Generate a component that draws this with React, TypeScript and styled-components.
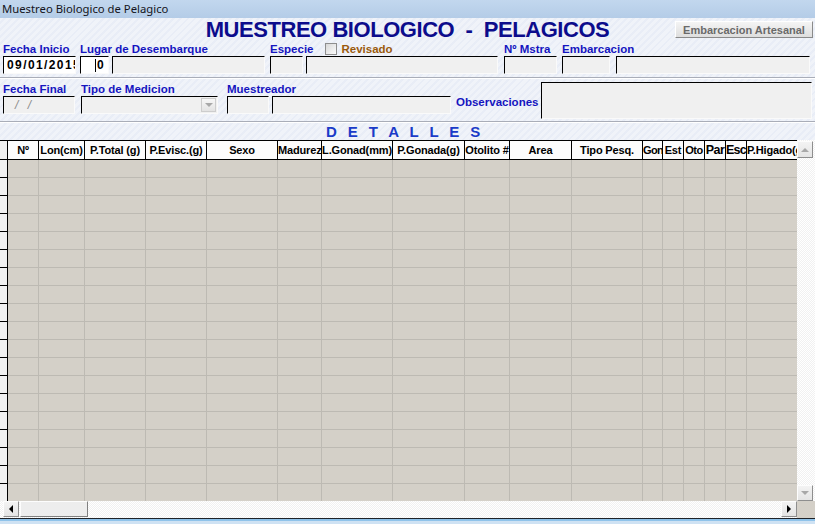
import React from "react";
import styled, { createGlobalStyle } from "styled-components";

const UI = `"Liberation Sans", Arial, sans-serif`;

const GlobalStyle = createGlobalStyle`
  html, body {
    margin: 0;
    padding: 0;
    overflow: hidden;
    background: #eef1f8;
  }
`;

const Window = styled.div`
  width: 815px;
  height: 524px;
  display: flex;
  flex-direction: column;
  overflow: hidden;
  font-family: ${UI};
  background:
    repeating-linear-gradient(135deg, rgba(200, 210, 235, 0.18) 0 2px, transparent 2px 5px),
    #f0f3f9;
`;

const TitleBar = styled.div`
  flex: none;
  height: 18px;
  box-sizing: border-box;
  padding-left: 2px;
  background: linear-gradient(#c2d7ee, #b4cce7);
  font: 11.3px "Noto Sans", sans-serif;
  line-height: 17px;
  color: #141420;
  white-space: nowrap;
`;

const Header = styled.div`
  flex: none;
  height: 24px;
  display: grid;
  grid-template-columns: 1fr auto 1fr;
  align-items: start;
`;

const BigTitle = styled.h1`
  grid-column: 2;
  margin: 0;
  font: bold 22px ${UI};
  line-height: 24px;
  letter-spacing: -0.45px;
  color: #0c0c8c;
  white-space: pre;
`;

const TopButton = styled.button`
  justify-self: end;
  margin: 3px 2px 0 0;
  width: 138px;
  height: 17px;
  padding: 0;
  box-sizing: border-box;
  border: 1px solid #a7a7a7;
  border-color: #ffffff #8a8a8a #8a8a8a #ffffff;
  background: linear-gradient(#f4f4f4, #dedede);
  font: bold 11px ${UI};
  color: #6a6a6a;
  white-space: nowrap;
`;

const FieldRow = styled.div<{ $h: number; $pt?: number }>`
  flex: none;
  height: ${(p) => p.$h}px;
  box-sizing: border-box;
  padding: ${(p) => p.$pt ?? 0}px 0 0 3px;
  display: flex;
  align-items: flex-start;
`;

const Group = styled.div<{ $ml?: number }>`
  display: flex;
  flex-direction: column;
  margin-left: ${(p) => p.$ml ?? 0}px;
`;

const Label = styled.div<{ $center?: boolean; $ml?: number }>`
  height: 14px;
  line-height: 14px;
  display: flex;
  align-items: center;
  font: bold 11.5px ${UI};
  color: #1515c0;
  white-space: nowrap;
  margin-left: ${(p) => p.$ml ?? 0}px;
  align-self: ${(p) => (p.$center ? "center" : "auto")};
`;

const Brown = styled.span`
  color: #9a5a0c;
`;

const Check = styled.span`
  width: 12px;
  height: 12px;
  box-sizing: border-box;
  margin: 0 4px 0 12px;
  border: 1px solid #8e8e8e;
  background: linear-gradient(135deg, #d8d8d8, #fbfbfb);
`;

const Inputs = styled.div<{ $gap?: number }>`
  display: flex;
  gap: ${(p) => p.$gap ?? 3}px;
`;

const Field = styled.div<{ $w: number; $h?: number; $white?: boolean; $right?: boolean; $ml?: number }>`
  flex: none;
  box-sizing: border-box;
  width: ${(p) => p.$w}px;
  height: ${(p) => p.$h ?? 18}px;
  margin-left: ${(p) => p.$ml ?? 0}px;
  display: flex;
  align-items: center;
  justify-content: ${(p) => (p.$right ? "flex-end" : "flex-start")};
  padding: ${(p) => (p.$right ? "0 3px 0 0" : "0 0 0 3px")};
  background: ${(p) => (p.$white ? "#ffffff" : "#f0f0f0")};
  border-top: 1px solid #000;
  border-left: 1px solid #000;
  border-right: 1px solid #fafafa;
  border-bottom: 1px solid #fafafa;
  overflow: hidden;
  white-space: nowrap;
  font: bold 12px ${UI};
  letter-spacing: 1.4px;
  color: #000;
`;

const Caret = styled.span`
  width: 1px;
  height: 13px;
  background: #000;
  margin-right: 1px;
`;

const Placeholder = styled.span`
  font: italic 12px ${UI};
  letter-spacing: 3px;
  color: #8a8a8a;
  margin-left: 8px;
`;

const DropButton = styled.span`
  margin-left: auto;
  margin-right: 1px;
  width: 15px;
  height: 14px;
  box-sizing: border-box;
  border: 1px solid #cdcdcd;
  background: linear-gradient(#f7f7f7, #e3e3e3);
  display: flex;
  align-items: center;
  justify-content: center;
`;

const Separator = styled.div`
  flex: none;
  height: 2px;
  box-sizing: border-box;
  border-top: 1px solid #a9adb8;
  border-bottom: 1px solid #ffffff;
`;

const Section = styled.div`
  flex: none;
  height: 17px;
  line-height: 20px;
  padding-left: 326px;
  font: bold 15px ${UI};
  word-spacing: 6.8px;
  color: #1a3bc8;
  white-space: nowrap;
`;

const GridArea = styled.div`
  flex: none;
  display: flex;
  flex-direction: column;
`;

const GridTop = styled.div`
  display: flex;
`;

const Table = styled.div`
  width: 797px;
  flex: none;
  overflow: hidden;
`;

const HeadRow = styled.div`
  display: flex;
  height: 20px;
  box-sizing: border-box;
  border-top: 1px solid #000;
`;

const HeadCell = styled.div<{ $w: number; $size: number; $ls: number }>`
  flex: none;
  width: ${(p) => p.$w}px;
  box-sizing: border-box;
  border-right: 1px solid #000;
  border-bottom: 1px solid #000;
  background: #fcfcfc;
  padding: 0;
  font: bold ${(p) => p.$size}px ${UI};
  letter-spacing: ${(p) => p.$ls}px;
  line-height: 18px;
  text-align: center;
  white-space: nowrap;
  overflow: hidden;
  color: #000;
`;

const RowHead = styled.div`
  flex: none;
  width: 8px;
  box-sizing: border-box;
  border-right: 1px solid #000;
  border-bottom: 1px solid #000;
  background: #f0f0f0;
`;

const Body = styled.div`
  height: 341px;
  overflow: hidden;
`;

const BodyRow = styled.div`
  display: flex;
  height: 18px;
`;

const Cell = styled.div<{ $w: number }>`
  flex: none;
  width: ${(p) => p.$w}px;
  box-sizing: border-box;
  border-right: 1px solid #bdbab3;
  border-bottom: 1px solid #bdbab3;
  background: #d4d0c8;
`;

const dither = `repeating-conic-gradient(#ffffff 0 25%, #f1f1f1 0 50%) 0 0 / 2px 2px`;

const VScroll = styled.div`
  width: 18px;
  flex: none;
  display: flex;
  flex-direction: column;
  justify-content: space-between;
  padding: 1px 0 0;
  box-sizing: border-box;
  background: ${dither};
`;

const ScrollButton = styled.div<{ $h?: number }>`
  flex: none;
  width: 16px;
  height: ${(p) => p.$h ?? 16}px;
  box-sizing: border-box;
  display: flex;
  align-items: center;
  justify-content: center;
  border: 1px solid;
  border-color: #fdfdfd #8e8e8e #8e8e8e #fdfdfd;
  background: linear-gradient(#f3f3f3, #e4e4e4);
`;

const HScroll = styled.div`
  flex: none;
  height: 17px;
  display: flex;
  align-items: flex-start;
  background: ${dither};
`;

const Gap = styled.div<{ $w: number }>`
  flex: none;
  width: ${(p) => p.$w}px;
`;

const Thumb = styled.div`
  flex: none;
  width: 68px;
  height: 16px;
  margin-left: 1px;
  box-sizing: border-box;
  border: 1px solid;
  border-color: #fdfdfd #808080 #808080 #fdfdfd;
  background: #ededed;
`;

const Track = styled.div`
  flex: 1;
`;

const Corner = styled.div`
  flex: none;
  width: 18px;
  height: 17px;
  background: #d4d0c8;
`;

const BottomStrip = styled.div`
  flex: 1;
  border-top: 1px solid #1e2228;
  background: linear-gradient(#8fc3ea 0 2px, #cfe2f3 2px);
`;

const Arrow = ({ dir, color }: { dir: "up" | "down" | "left" | "right"; color: string }) => {
  const pts = {
    up: "0,4 4,0 8,4",
    down: "0,0 8,0 4,4",
    left: "4,0 4,8 0,4",
    right: "0,0 4,4 0,8",
  }[dir];
  const v = dir === "up" || dir === "down";
  return (
    <svg width={v ? 8 : 4} height={v ? 4 : 8} viewBox={v ? "0 0 8 4" : "0 0 4 8"}>
      <polygon points={pts} fill={color} />
    </svg>
  );
};

// column title, width in px (right border included), font size, letter spacing
const COLS: { t: string; w: number; s?: number; ls?: number }[] = [
  { t: "Nº", w: 31 },
  { t: "Lon(cm)", w: 46 },
  { t: "P.Total (g)", w: 61 },
  { t: "P.Evisc.(g)", w: 61 },
  { t: "Sexo", w: 71 },
  { t: "Madurez", w: 44 },
  { t: "L.Gonad(mm)", w: 71 },
  { t: "P.Gonada(g)", w: 72 },
  { t: "Otolito #", w: 45 },
  { t: "Area", w: 62 },
  { t: "Tipo Pesq.", w: 71 },
  { t: "Gon", w: 20, ls: -0.6 },
  { t: "Est", w: 21 },
  { t: "Oto", w: 21, ls: -0.4 },
  { t: "Par", w: 21, s: 12.5, ls: -0.5 },
  { t: "Esc", w: 21, s: 12.5, ls: -0.8 },
  { t: "P.Higado(g)", w: 51 },
];

const ROWS = Array.from({ length: 19 }, (_, i) => i);

export default function App() {
  return (
    <>
      <GlobalStyle />
      <Window>
        <TitleBar>Muestreo Biologico de Pelagico</TitleBar>

        <Header>
          <BigTitle>{"MUESTREO BIOLOGICO  -  PELAGICOS"}</BigTitle>
          <TopButton>Embarcacion Artesanal</TopButton>
        </Header>

        <FieldRow $h={35}>
          <Group>
            <Label>Fecha Inicio</Label>
            <Field $w={73} $white>09/01/2015</Field>
          </Group>
          <Group $ml={4}>
            <Label>Lugar de Desembarque</Label>
            <Inputs>
              <Field $w={29} $white $right>
                <Caret />0
              </Field>
              <Field $w={153} />
            </Inputs>
          </Group>
          <Group $ml={5}>
            <Label>
              Especie
              <Check />
              <Brown>Revisado</Brown>
            </Label>
            <Inputs>
              <Field $w={33} />
              <Field $w={192} />
            </Inputs>
          </Group>
          <Group $ml={6}>
            <Label>Nº Mstra</Label>
            <Field $w={53} />
          </Group>
          <Group $ml={5}>
            <Label>Embarcacion</Label>
            <Inputs $gap={6}>
              <Field $w={48} />
              <Field $w={194} />
            </Inputs>
          </Group>
        </FieldRow>

        <Separator />

        <FieldRow $h={42} $pt={3}>
          <Group>
            <Label>Fecha Final</Label>
            <Field $w={72}>
              <Placeholder>/ /</Placeholder>
            </Field>
          </Group>
          <Group $ml={6}>
            <Label>Tipo de Medicion</Label>
            <Field $w={137}>
              <DropButton>
                <Arrow dir="down" color="#a8a8a8" />
              </DropButton>
            </Field>
          </Group>
          <Group $ml={9}>
            <Label>Muestreador</Label>
            <Inputs>
              <Field $w={42} />
              <Field $w={179} />
            </Inputs>
          </Group>
          <Label $center $ml={5}>
            Observaciones
          </Label>
          <Field $w={271} $h={37} $ml={3} />
        </FieldRow>

        <Separator />

        <Section>D E T A L L E S</Section>

        <GridArea>
          <GridTop>
            <Table>
              <HeadRow>
                <RowHead />
                {COLS.map((c) => (
                  <HeadCell key={c.t} $w={c.w} $size={c.s ?? 11} $ls={c.ls ?? -0.15}>
                    {c.t}
                  </HeadCell>
                ))}
              </HeadRow>
              <Body>
                {ROWS.map((r) => (
                  <BodyRow key={r}>
                    <RowHead />
                    {COLS.map((c) => (
                      <Cell key={c.t} $w={c.w} />
                    ))}
                  </BodyRow>
                ))}
              </Body>
            </Table>
            <VScroll>
              <ScrollButton $h={17}>
                <Arrow dir="up" color="#a8a8a8" />
              </ScrollButton>
              <ScrollButton>
                <Arrow dir="down" color="#a8a8a8" />
              </ScrollButton>
            </VScroll>
          </GridTop>
          <HScroll>
            <Gap $w={3} />
            <ScrollButton>
              <Arrow dir="left" color="#000" />
            </ScrollButton>
            <Thumb />
            <Track />
            <ScrollButton>
              <Arrow dir="right" color="#000" />
            </ScrollButton>
            <Corner />
          </HScroll>
        </GridArea>

        <BottomStrip />
      </Window>
    </>
  );
}
